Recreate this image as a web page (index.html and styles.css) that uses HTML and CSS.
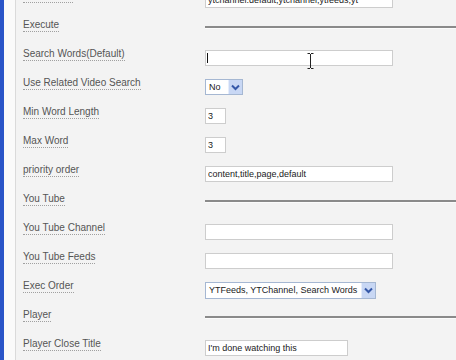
FILE: index.html
```html
<!DOCTYPE html>
<html lang="en">
<head>
    <meta charset="UTF-8">
    <meta name="viewport" content="width=device-width, initial-scale=1.0">
    <title>Module Parameters</title>
    <link rel="stylesheet" href="styles.css">
</head>
<body>

    <div class="window">
        <div class="edge"></div>
        <div class="gutter"></div>
        <div class="panel">
            <div class="form">
                <div class="row">
                    <div class="label-cell"><label>Exec Mode</label></div>
                    <div class="field"><input type="text" class="text wide" value="ytchannel:default,ytchannel,ytfeeds,yt"></div>
                </div>
                <div class="row">
                    <div class="label-cell"><label>Execute</label></div>
                    <div class="field"><div class="rule"></div></div>
                </div>
                <div class="row">
                    <div class="label-cell"><label>Search Words(Default)</label></div>
                    <div class="field">
                        <input type="text" class="text wide" value="">
                        <span class="caret"></span>
                        <svg class="ibeam" width="7" height="16" viewBox="0 0 7 16">
                            <path d="M0.5 0.5h2.5M4 0.5h2.5M3.5 1v14M0.5 15.5h2.5M4 15.5h2.5" stroke="#222" stroke-width="1" fill="none"/>
                        </svg>
                    </div>
                </div>
                <div class="row">
                    <div class="label-cell"><label>Use Related Video Search</label></div>
                    <div class="field">
                        <div class="select small-select"><span class="value">No</span><span class="arrow"><svg width="9" height="7" viewBox="0 0 9 7"><path d="M1 1.5l3.5 3.5 3.5-3.5" stroke="#3558a8" stroke-width="2" fill="none"/></svg></span></div>
                    </div>
                </div>
                <div class="row">
                    <div class="label-cell"><label>Min Word Length</label></div>
                    <div class="field"><input type="text" class="text tiny" value="3"></div>
                </div>
                <div class="row">
                    <div class="label-cell"><label>Max Word</label></div>
                    <div class="field"><input type="text" class="text tiny" value="3"></div>
                </div>
                <div class="row">
                    <div class="label-cell"><label>priority order</label></div>
                    <div class="field"><input type="text" class="text wide" value="content,title,page,default"></div>
                </div>
                <div class="row">
                    <div class="label-cell"><label>You Tube</label></div>
                    <div class="field"><div class="rule"></div></div>
                </div>
                <div class="row">
                    <div class="label-cell"><label>You Tube Channel</label></div>
                    <div class="field"><input type="text" class="text wide" value=""></div>
                </div>
                <div class="row">
                    <div class="label-cell"><label>You Tube Feeds</label></div>
                    <div class="field"><input type="text" class="text wide" value=""></div>
                </div>
                <div class="row">
                    <div class="label-cell"><label>Exec Order</label></div>
                    <div class="field">
                        <div class="select long-select"><span class="value">YTFeeds, YTChannel, Search Words</span><span class="arrow"><svg width="9" height="7" viewBox="0 0 9 7"><path d="M1 1.5l3.5 3.5 3.5-3.5" stroke="#3558a8" stroke-width="2" fill="none"/></svg></span></div>
                    </div>
                </div>
                <div class="row">
                    <div class="label-cell"><label>Player</label></div>
                    <div class="field"><div class="rule"></div></div>
                </div>
                <div class="row">
                    <div class="label-cell"><label>Player Close Title</label></div>
                    <div class="field"><input type="text" class="text medium" value="I'm done watching this"></div>
                </div>
            </div>
        </div>
    </div>

</body>
</html>
```

FILE: styles.css
```css
body { margin: 0; height: 360px; overflow: hidden; background: #f3f3f3; }
.window { display: flex; height: 360px; overflow: hidden; }
.edge { width: 4px; background: #2a55c8; }
.gutter { width: 11px; background: #fafafa; }
.panel {
    flex: 1;
    border-left: 1px solid #dadada;
    padding-left: 7px;
    background: #f3f3f3;
    overflow: hidden;
}
.form { margin-top: -16px; }
.row {
    display: flex;
    align-items: flex-start;
    height: 29px;
    padding-top: 5px;
    box-sizing: border-box;
}
.label-cell { width: 182px; flex: none; display: flex; align-items: flex-start; padding-top: 1px; }
label {
    display: block;
    font: 10px/12px "Liberation Sans", Arial, sans-serif;
    color: #555;
    border-bottom: 1px dotted #a0a0a0;
}
.field { flex: 1; margin-top: 3px; position: relative; }
/* text boxes */
.text {
    display: block;
    height: 16px;
    box-sizing: border-box;
    border: 1px solid #cdcdcd;
    background: #fff;
    padding: 0 2px;
    font: 9px "Liberation Sans", Arial, sans-serif;
    color: #1a1a1a;
    outline: none;
}
.wide { width: 188px; }
.medium { width: 143px; }
.tiny { width: 21px; }
.caret {
    position: absolute;
    left: 2px;
    top: 3px;
    width: 1px;
    height: 10px;
    background: #111;
}
.ibeam { position: absolute; left: 102px; top: 3px; }
/* separators */
.rule {
    height: 2px;
    margin-top: 5px;
    background: #8a8a8a;
    border-bottom: 1px solid #fbfbfb;
}
/* drop downs */
.select {
    display: flex;
    height: 16px;
    box-sizing: border-box;
    border: 1px solid #a5b7d2;
    background: #fff;
    font: 9px/14px "Liberation Sans", Arial, sans-serif;
    color: #1a1a1a;
}
.select .value { flex: 1; padding: 0 3px; white-space: nowrap; overflow: hidden; }
.select .arrow {
    width: 13px;
    display: flex;
    align-items: center;
    justify-content: center;
    background: #c8d7f4;
    border-left: 1px solid #e6edfb;
}
.small-select { width: 38px; }
.long-select { width: 171px; height: 17px; }
```
